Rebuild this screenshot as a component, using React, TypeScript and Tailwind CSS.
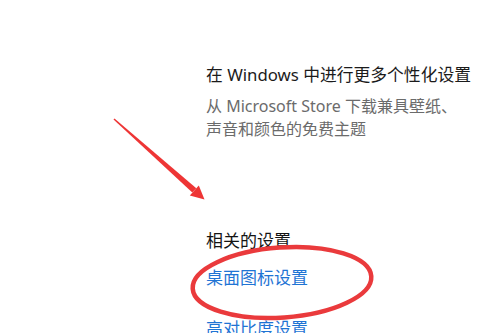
import React from "react";

export default function App() {
  return (
    <div className="relative w-[500px] h-[333px] overflow-hidden bg-white font-['Noto_Sans','Noto_Sans_CJK_SC',sans-serif]">
      <div className="flex flex-col pl-[206px] pt-[63px]">
        <div className="text-[16.8px] leading-[24px] text-[#1b1b1b] whitespace-nowrap">
          在 Windows 中进行更多个性化设置
        </div>
        <div className="mt-[8px] text-[16px] leading-[23px] text-[#6b6b6b] whitespace-nowrap">
          从 Microsoft Store 下载兼具壁纸、
          <br />
          声音和颜色的免费主题
        </div>
        <div className="mt-[88px] text-[17px] leading-[24px] text-[#141414] whitespace-nowrap">
          相关的设置
        </div>
        <div className="mt-[13px] text-[17px] leading-[24px] text-[#1f74d4] whitespace-nowrap">
          桌面图标设置
        </div>
        <div className="mt-[27px] text-[17px] leading-[24px] text-[#1f74d4] whitespace-nowrap">
          高对比度设置
        </div>
      </div>
      <svg
        className="absolute left-0 top-0 pointer-events-none"
        width="500"
        height="333"
        viewBox="0 0 500 333"
      >
        <polygon
          points="113.5,119.6 114.5,118.4 196.3,188.2 192.3,192.6"
          fill="#ee3535"
        />
        <polygon
          points="189.8,195.4 198.8,185.4 204.5,199.5"
          fill="#ee3535"
        />
        <ellipse
          cx="282"
          cy="282.5"
          rx="89.5"
          ry="35"
          transform="rotate(-4 282 282.5)"
          fill="none"
          stroke="#ea3a3c"
          strokeWidth="4.5"
        />
      </svg>
    </div>
  );
}
